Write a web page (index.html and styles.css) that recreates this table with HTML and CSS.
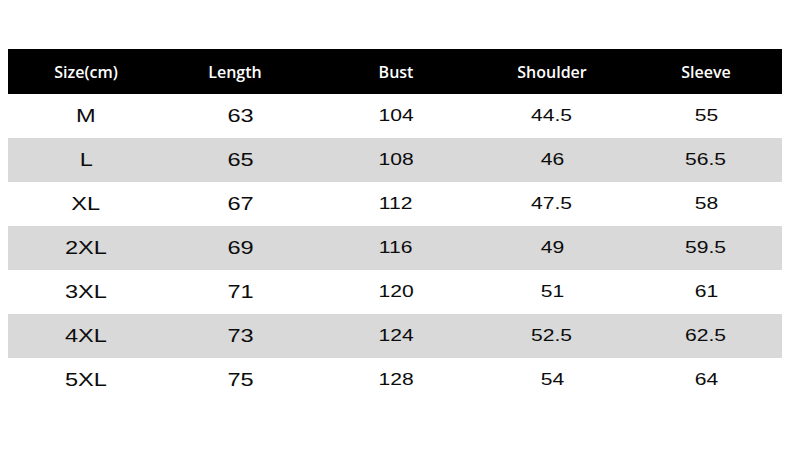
FILE: index.html
```html
<!DOCTYPE html>
<html>
<head>
<meta charset="utf-8">
<link rel="stylesheet" href="styles.css">
</head>
<body>
<div class="table">
  <div class="row head">
    <div class="c"><span>Size(cm)</span></div><div class="c shift"><span>Length</span></div><div class="c"><span>Bust</span></div><div class="c"><span>Shoulder</span></div><div class="c"><span>Sleeve</span></div>
  </div>
  <div class="row"><div class="c big"><span>M</span></div><div class="c big"><span>63</span></div><div class="c"><span>104</span></div><div class="c"><span>44.5</span></div><div class="c"><span>55</span></div></div>
  <div class="row alt"><div class="c big"><span>L</span></div><div class="c big"><span>65</span></div><div class="c"><span>108</span></div><div class="c"><span>46</span></div><div class="c"><span>56.5</span></div></div>
  <div class="row"><div class="c big"><span>XL</span></div><div class="c big"><span>67</span></div><div class="c"><span>112</span></div><div class="c"><span>47.5</span></div><div class="c"><span>58</span></div></div>
  <div class="row alt"><div class="c big"><span>2XL</span></div><div class="c big"><span>69</span></div><div class="c"><span>116</span></div><div class="c"><span>49</span></div><div class="c"><span>59.5</span></div></div>
  <div class="row"><div class="c big"><span>3XL</span></div><div class="c big"><span>71</span></div><div class="c"><span>120</span></div><div class="c"><span>51</span></div><div class="c"><span>61</span></div></div>
  <div class="row alt"><div class="c big"><span>4XL</span></div><div class="c big"><span>73</span></div><div class="c"><span>124</span></div><div class="c"><span>52.5</span></div><div class="c"><span>62.5</span></div></div>
  <div class="row"><div class="c big"><span>5XL</span></div><div class="c big"><span>75</span></div><div class="c"><span>128</span></div><div class="c"><span>54</span></div><div class="c"><span>64</span></div></div>
</div>
</body>
</html>
```
FILE: styles.css
```css
html, body {
  margin: 0;
  padding: 0;
  background: #ffffff;
}
body {
  padding: 49px 8px 0 8px;
  font-family: "Liberation Sans", Arial, sans-serif;
  color: #0c0c0c;
}
.table {
  width: 774px;
  display: flex;
  flex-direction: column;
}
.row {
  display: grid;
  grid-template-columns: 156px 154px 156px 156px 152px;
  height: 44px;
  align-items: center;
  background: #ffffff;
}
.row.alt {
  background: #d9d9d9;
}
.row.head {
  background: #000000;
  color: #ffffff;
  height: 45px;
}
.c {
  text-align: center;
  font-size: 17px;
  line-height: 20px;
}
.c span {
  display: inline-block;
  transform: scaleX(1.24);
}
.c.big {
  font-size: 19px;
}
.head .c {
  font-family: "Open Sans", sans-serif;
  font-weight: 600;
  font-size: 16px;
}
.head .c span {
  transform: none;
}
.head .c.shift {
  padding-right: 12px;
}
```
